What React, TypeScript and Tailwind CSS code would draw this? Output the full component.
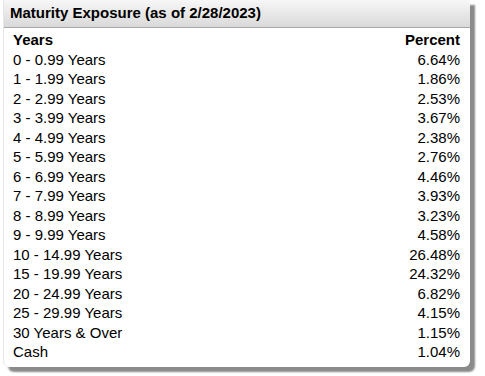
const rows = [
  ['0 - 0.99 Years', '6.64%'],
  ['1 - 1.99 Years', '1.86%'],
  ['2 - 2.99 Years', '2.53%'],
  ['3 - 3.99 Years', '3.67%'],
  ['4 - 4.99 Years', '2.38%'],
  ['5 - 5.99 Years', '2.76%'],
  ['6 - 6.99 Years', '4.46%'],
  ['7 - 7.99 Years', '3.93%'],
  ['8 - 8.99 Years', '3.23%'],
  ['9 - 9.99 Years', '4.58%'],
  ['10 - 14.99 Years', '26.48%'],
  ['15 - 19.99 Years', '24.32%'],
  ['20 - 24.99 Years', '6.82%'],
  ['25 - 29.99 Years', '4.15%'],
  ['30 Years & Over', '1.15%'],
  ['Cash', '1.04%'],
]

export default function App() {
  return (
    <div className="w-[485px] h-[376px] bg-white font-['Liberation_Sans',Arial,sans-serif] text-black">
      <div className="ml-[3px] w-[467px] h-[367px] bg-white rounded-b-[6px] shadow-[5px_5px_2px_#8a8a8a] overflow-hidden border-l border-[#e6e6e6]">
        <div className="h-[28px] flex items-center px-[6px] bg-gradient-to-b from-[#f7f7f7] to-[#d9d9d9] border-b border-[#a8a8a8]">
          <span className="text-[15px] font-bold">Maturity Exposure (as of 2/28/2023)</span>
        </div>
        <div className="pl-[9px] pr-[10px] pt-[2px] text-[15px] leading-[19.5px]">
          <div className="flex justify-between font-bold">
            <span>Years</span>
            <span>Percent</span>
          </div>
          {rows.map(([label, pct]) => (
            <div key={label} className="flex justify-between">
              <span>{label}</span>
              <span>{pct}</span>
            </div>
          ))}
        </div>
      </div>
    </div>
  )
}
